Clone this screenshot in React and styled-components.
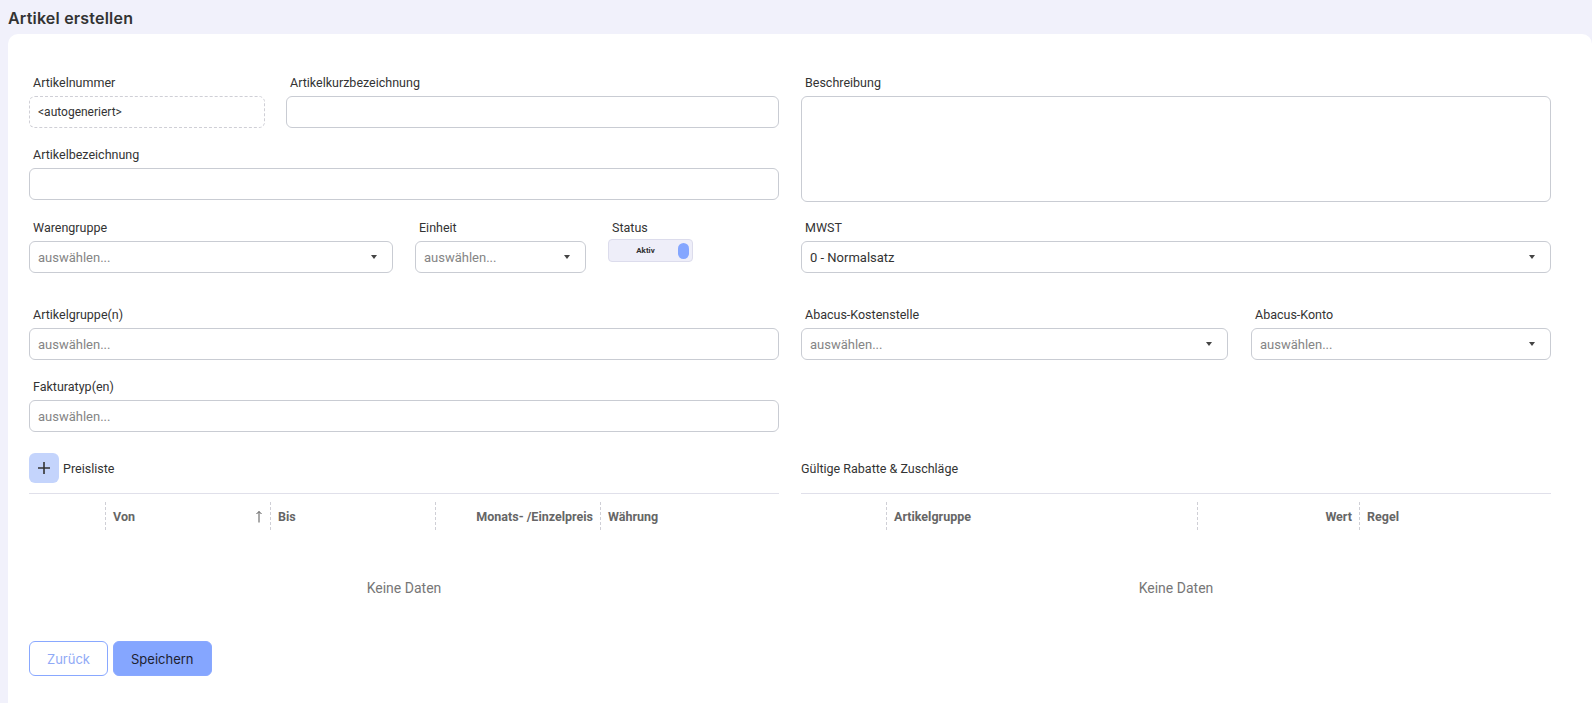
import React from 'react';
import styled, { createGlobalStyle } from 'styled-components';

const GlobalStyle = createGlobalStyle`
  html, body {
    margin: 0;
    padding: 0;
    background: #f1f1fb;
    overflow: hidden;
  }
  body {
    font-family: Roboto, 'Liberation Sans', sans-serif;
    color: #333;
  }
  * { box-sizing: border-box; }
`;

const Page = styled.div`
  height: 703px;
  overflow: hidden;
`;

const Title = styled.h1`
  margin: 0;
  height: 34px;
  padding: 9px 0 0 8px;
  font-family: Inter, 'Open Sans', sans-serif;
  font-size: 16px;
  line-height: 18px;
  font-weight: 600;
  letter-spacing: 0.2px;
  color: #333;
`;

const Card = styled.div`
  margin-left: 8px;
  background: #fff;
  border-radius: 10px 10px 0 0;
  height: 669px;
  padding: 40px 41px 0 21px;
`;

const TwoCols = styled.div`
  display: grid;
  grid-template-columns: 1fr 1fr;
  column-gap: 22px;
  margin-top: ${p => p.$mt || 0}px;
`;

const Stack = styled.div`
  display: flex;
  flex-direction: column;
  gap: ${p => p.$gap || 18}px;
`;

const Row = styled.div`
  display: flex;
  gap: ${p => p.$gap || 21}px;
`;

const Field = styled.div`
  display: flex;
  flex-direction: column;
  width: ${p => (p.$w ? `${p.$w}px` : 'auto')};
  flex: ${p => (p.$w ? 'none' : '1')};
  min-width: 0;
`;

const Label = styled.label`
  font-size: 12.5px;
  line-height: 18px;
  padding-left: 4px;
  margin-bottom: 4px;
  color: #333;
`;

const Box = styled.div`
  height: ${p => p.$h || 32}px;
  border: 1px ${p => (p.$dashed ? 'dashed #cfcfd6' : 'solid #c9ccd3')};
  border-radius: 6px;
  display: flex;
  align-items: center;
  padding: 0 8px;
  font-size: 13px;
  color: ${p => (p.$placeholder ? '#858585' : '#333')};
  background: #fff;
`;

const BoxText = styled.span`
  flex: 1;
  font-size: ${p => (p.$small ? 12 : 13)}px;
`;

const Caret = styled.span`
  width: 0;
  height: 0;
  margin-right: 7px;
  border-left: 3.5px solid transparent;
  border-right: 3.5px solid transparent;
  border-top: 4px solid #444;
`;

const Toggle = styled.div`
  width: 85px;
  height: 23px;
  margin-top: -2px;
  border: 1px solid #dcdcec;
  border-radius: 4px;
  background: #eeeef9;
  display: flex;
  align-items: center;
  padding: 0 3px 0 0;
`;

const ToggleText = styled.span`
  flex: 1;
  text-align: center;
  font-size: 8px;
  font-weight: 700;
  color: #333;
  padding-left: 4px;
`;

const Knob = styled.span`
  width: 11px;
  height: 16px;
  border-radius: 6px;
  background: #84a6ff;
`;

const SectionHead = styled.div`
  display: flex;
  align-items: center;
  gap: 4px;
  height: 30px;
  font-size: 12.5px;
  color: #333;
`;

const PlusButton = styled.button`
  width: 30px;
  height: 30px;
  border: none;
  border-radius: 6px;
  background: #c4d4fc;
  display: flex;
  align-items: center;
  justify-content: center;
  padding: 0;
  cursor: pointer;
`;

const Table = styled.div`
  margin-top: 10px;
  border-top: 1px solid #e0e0ea;
`;

const HeadRow = styled.div`
  display: grid;
  grid-template-columns: ${p => p.$cols};
  height: 44px;
  align-items: center;
`;

const HeadCell = styled.div`
  height: 28px;
  display: flex;
  align-items: center;
  justify-content: ${p => (p.$right ? 'flex-end' : 'space-between')};
  padding: 0 7px;
  font-size: 12.5px;
  font-weight: 700;
  color: #666;
  border-left: ${p => (p.$sep ? '1px dashed #cfcfd6' : 'none')};
`;

const Empty = styled.div`
  height: 84px;
  padding-top: 41px;
  text-align: center;
  font-size: 14px;
  line-height: 18px;
  color: #777;
`;

const Actions = styled.div`
  display: flex;
  gap: 5px;
  margin-top: 19px;
`;

const Button = styled.button`
  height: 35px;
  padding: 0 17px;
  border-radius: 6px;
  border: 1px solid #89a8ff;
  background: ${p => (p.$primary ? '#85a6ff' : '#fff')};
  color: ${p => (p.$primary ? '#1e2230' : '#8fa9f6')};
  font-family: Inter, 'Open Sans', sans-serif;
  font-size: 13px;
  cursor: pointer;
`;

const Select = ({ value, placeholder = 'auswählen...' }) => (
  <Box $placeholder={!value}>
    <BoxText>{value || placeholder}</BoxText>
    <Caret />
  </Box>
);

const SortArrow = () => (
  <svg width="8" height="13" viewBox="0 0 8 13" fill="none" stroke="#555" strokeWidth="1">
    <path d="M4 1.5V12.5M1.5 4L4 1.5L6.5 4" />
  </svg>
);

const PlusIcon = () => (
  <svg width="14" height="14" viewBox="0 0 14 14" stroke="#333" strokeWidth="1.6">
    <path d="M7 1V13M1 7H13" />
  </svg>
);

const priceCols = '76px 165px 165px 165px 1fr';
const rabattCols = '85px 311px 162px 1fr';

export default function App() {
  return (
    <Page>
      <GlobalStyle />
      <Title>Artikel erstellen</Title>
      <Card>
        <TwoCols>
          <Stack>
            <Row>
              <Field $w={236}>
                <Label>Artikelnummer</Label>
                <Box $dashed>
                  <BoxText $small>&lt;autogeneriert&gt;</BoxText>
                </Box>
              </Field>
              <Field>
                <Label>Artikelkurzbezeichnung</Label>
                <Box />
              </Field>
            </Row>
            <Field>
              <Label>Artikelbezeichnung</Label>
              <Box />
            </Field>
            <Row $gap={22}>
              <Field $w={364}>
                <Label>Warengruppe</Label>
                <Select />
              </Field>
              <Field $w={171}>
                <Label>Einheit</Label>
                <Select />
              </Field>
              <Field $w={85}>
                <Label>Status</Label>
                <Toggle>
                  <ToggleText>Aktiv</ToggleText>
                  <Knob />
                </Toggle>
              </Field>
            </Row>
          </Stack>
          <Stack $gap={17}>
            <Field>
              <Label>Beschreibung</Label>
              <Box $h={106} />
            </Field>
            <Field>
              <Label>MWST</Label>
              <Select value="0 - Normalsatz" />
            </Field>
          </Stack>
        </TwoCols>

        <TwoCols $mt={33}>
          <Stack>
            <Field>
              <Label>Artikelgruppe(n)</Label>
              <Box $placeholder>
                <BoxText>auswählen...</BoxText>
              </Box>
            </Field>
            <Field>
              <Label>Fakturatyp(en)</Label>
              <Box $placeholder>
                <BoxText>auswählen...</BoxText>
              </Box>
            </Field>
          </Stack>
          <Row $gap={23}>
            <Field $w={427}>
              <Label>Abacus-Kostenstelle</Label>
              <Select />
            </Field>
            <Field>
              <Label>Abacus-Konto</Label>
              <Select />
            </Field>
          </Row>
        </TwoCols>

        <TwoCols $mt={21}>
          <div>
            <SectionHead>
              <PlusButton>
                <PlusIcon />
              </PlusButton>
              Preisliste
            </SectionHead>
            <Table>
              <HeadRow $cols={priceCols}>
                <HeadCell />
                <HeadCell $sep>
                  Von
                  <SortArrow />
                </HeadCell>
                <HeadCell $sep>Bis</HeadCell>
                <HeadCell $sep $right>Monats- /Einzelpreis</HeadCell>
                <HeadCell $sep>Währung</HeadCell>
              </HeadRow>
              <Empty>Keine Daten</Empty>
            </Table>
          </div>
          <div>
            <SectionHead>Gültige Rabatte &amp; Zuschläge</SectionHead>
            <Table>
              <HeadRow $cols={rabattCols}>
                <HeadCell />
                <HeadCell $sep>Artikelgruppe</HeadCell>
                <HeadCell $sep $right>Wert</HeadCell>
                <HeadCell $sep>Regel</HeadCell>
              </HeadRow>
              <Empty>Keine Daten</Empty>
            </Table>
          </div>
        </TwoCols>

        <Actions>
          <Button>Zurück</Button>
          <Button $primary>Speichern</Button>
        </Actions>
      </Card>
    </Page>
  );
}
